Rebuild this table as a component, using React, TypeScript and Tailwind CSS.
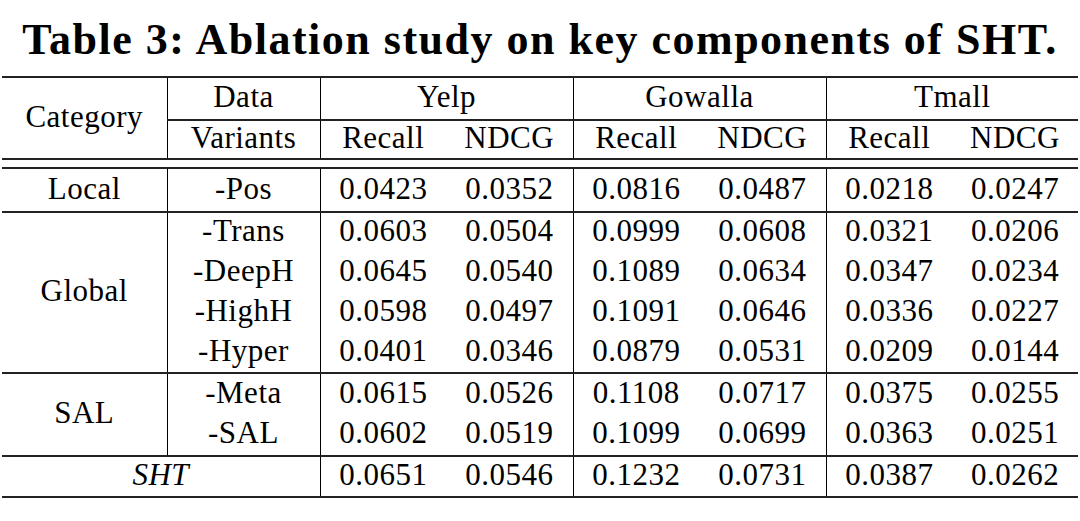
import React from 'react';

type Row = { variant: string; vals: string[] };

const localRows: Row[] = [{ variant: '-Pos', vals: ['0.0423', '0.0352', '0.0816', '0.0487', '0.0218', '0.0247'] }];

const globalRows: Row[] = [
  { variant: '-Trans', vals: ['0.0603', '0.0504', '0.0999', '0.0608', '0.0321', '0.0206'] },
  { variant: '-DeepH', vals: ['0.0645', '0.0540', '0.1089', '0.0634', '0.0347', '0.0234'] },
  { variant: '-HighH', vals: ['0.0598', '0.0497', '0.1091', '0.0646', '0.0336', '0.0227'] },
  { variant: '-Hyper', vals: ['0.0401', '0.0346', '0.0879', '0.0531', '0.0209', '0.0144'] },
];

const salRows: Row[] = [
  { variant: '-Meta', vals: ['0.0615', '0.0526', '0.1108', '0.0717', '0.0375', '0.0255'] },
  { variant: '-SAL', vals: ['0.0602', '0.0519', '0.1099', '0.0699', '0.0363', '0.0251'] },
];

const shtVals = ['0.0651', '0.0546', '0.1232', '0.0731', '0.0387', '0.0262'];

// vertical rules sit on the left of Recall columns
const Vals = ({ vals }: { vals: string[] }) => (
  <>
    {vals.map((v, i) => (
      <td key={i} className={`p-0 pb-[4px] text-center ${i % 2 === 0 ? 'border-l border-l-black' : ''}`}>
        {v}
      </td>
    ))}
  </>
);

const Block = ({ label, rows, heights }: { label: string; rows: Row[]; heights: string[] }) => (
  <>
    {rows.map((r, i) => (
      <tr key={r.variant} className={`${heights[i]} ${i === rows.length - 1 ? 'border-b-2 border-b-[#222]' : ''}`}>
        {i === 0 && (
          <td rowSpan={rows.length} className="p-0 pb-[4px] text-center">
            {label}
          </td>
        )}
        <td className="p-0 pb-[4px] text-center border-l border-l-black">{r.variant}</td>
        <Vals vals={r.vals} />
      </tr>
    ))}
  </>
);

export default function App() {
  return (
    <div className="w-[1080px] h-[521px] bg-white text-black font-['Liberation_Serif',serif] pt-[18px]">
      <h1 className="text-center font-bold text-[44px] leading-[44px] h-[44px] tracking-[1.5px]">
        Table 3: Ablation study on key components of SHT.
      </h1>
      <table className="ml-[2px] mt-[14px] w-[1076px] table-fixed border-collapse text-[31px] leading-none tracking-[0.5px]">
        <colgroup>
          <col className="w-[165px]" />
          <col className="w-[153px]" />
          <col className="w-[126px]" />
          <col className="w-[127px]" />
          <col className="w-[126px]" />
          <col className="w-[127px]" />
          <col className="w-[126px]" />
          <col className="w-[126px]" />
        </colgroup>
        <tbody>
          <tr className="h-[43px] border-t-2 border-t-[#222]">
            <td rowSpan={2} className="p-0 pb-[4px] text-center border-b-2 border-b-[#222]">
              Category
            </td>
            <td className="p-0 pb-[4px] text-center border-l border-l-black border-b-2 border-b-[#222]">Data</td>
            <td colSpan={2} className="p-0 pb-[4px] text-center border-l border-l-black border-b-2 border-b-[#222]">
              Yelp
            </td>
            <td colSpan={2} className="p-0 pb-[4px] text-center border-l border-l-black border-b-2 border-b-[#222]">
              Gowalla
            </td>
            <td colSpan={2} className="p-0 pb-[4px] text-center border-l border-l-black border-b-2 border-b-[#222]">
              Tmall
            </td>
          </tr>
          <tr className="h-[39px] border-b-2 border-b-[#222]">
            <td className="p-0 pb-[4px] text-center border-l border-l-black">Variants</td>
            <td className="p-0 pb-[4px] text-center border-l border-l-black">Recall</td>
            <td className="p-0 pb-[4px] text-center">NDCG</td>
            <td className="p-0 pb-[4px] text-center border-l border-l-black">Recall</td>
            <td className="p-0 pb-[4px] text-center">NDCG</td>
            <td className="p-0 pb-[4px] text-center border-l border-l-black">Recall</td>
            <td className="p-0 pb-[4px] text-center">NDCG</td>
          </tr>
          <tr className="h-[9px] border-b-2 border-b-[#222]">
            <td colSpan={8} className="p-0" />
          </tr>
          <Block label="Local" rows={localRows} heights={['h-[44px]']} />
          <Block label="Global" rows={globalRows} heights={['h-[40px]', 'h-[40px]', 'h-[40px]', 'h-[41px]']} />
          <Block label="SAL" rows={salRows} heights={['h-[41px]', 'h-[42px]']} />
          <tr className="h-[41px] border-b-2 border-b-[#222]">
            <td colSpan={2} className="p-0 pb-[4px] text-center italic">
              SHT
            </td>
            <Vals vals={shtVals} />
          </tr>
        </tbody>
      </table>
    </div>
  );
}
